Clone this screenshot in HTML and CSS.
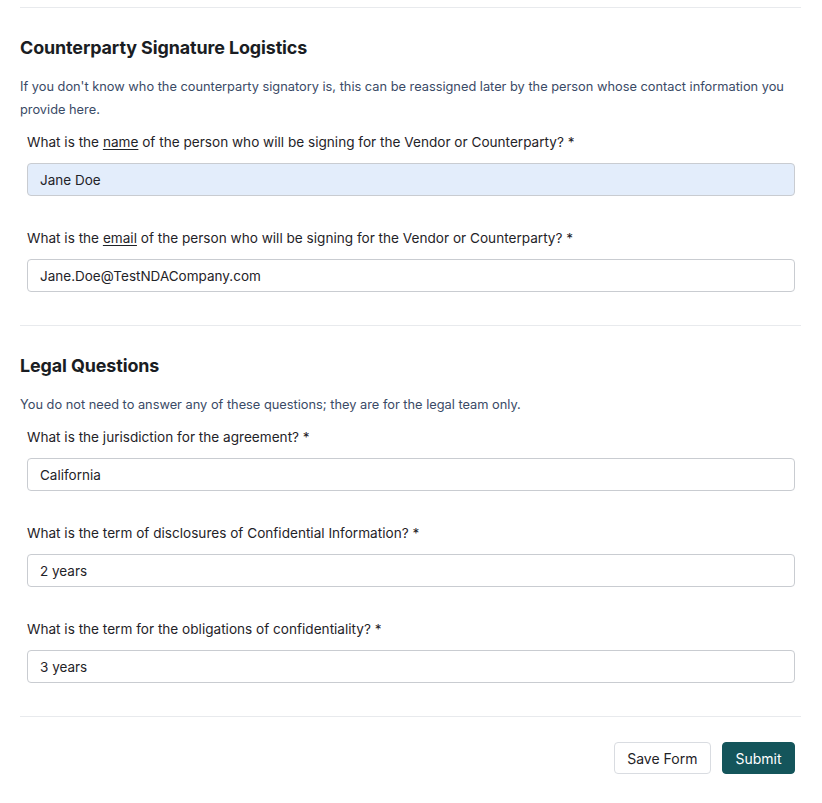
FILE: index.html
```html
<!DOCTYPE html>
<html lang="en">
<head>
<meta charset="utf-8">
<title>Form</title>
<link rel="stylesheet" href="styles.css">
</head>
<body>
<div class="page">
  <hr class="divider first">
  <section class="section">
    <h2 class="section-title">Counterparty Signature Logistics</h2>
    <p class="section-desc">If you don't know who the counterparty signatory is, this can be reassigned later by the person whose contact information you provide here.</p>
    <div class="field">
      <label class="field-label">What is the <u>name</u> of the person who will be signing for the Vendor or Counterparty? *</label>
      <div class="input autofill">Jane Doe</div>
    </div>
    <div class="field">
      <label class="field-label">What is the <u>email</u> of the person who will be signing for the Vendor or Counterparty? *</label>
      <div class="input">Jane.Doe@TestNDACompany.com</div>
    </div>
  </section>
  <hr class="divider">
  <section class="section">
    <h2 class="section-title">Legal Questions</h2>
    <p class="section-desc">You do not need to answer any of these questions; they are for the legal team only.</p>
    <div class="field">
      <label class="field-label">What is the jurisdiction for the agreement? *</label>
      <div class="input">California</div>
    </div>
    <div class="field">
      <label class="field-label">What is the term of disclosures of Confidential Information? *</label>
      <div class="input">2 years</div>
    </div>
    <div class="field">
      <label class="field-label">What is the term for the obligations of confidentiality? *</label>
      <div class="input">3 years</div>
    </div>
  </section>
  <hr class="divider">
  <div class="actions">
    <button class="btn btn-secondary">Save Form</button>
    <button class="btn btn-primary">Submit</button>
  </div>
</div>
</body>
</html>
```
FILE: styles.css
```css
* { box-sizing: border-box; }
html, body { margin: 0; padding: 0; background: #ffffff; }
body {
  font-family: Inter, "Noto Sans", "Liberation Sans", sans-serif;
  color: #1f2328;
}
.page {
  padding: 7px 21px 0 20px;
}
.divider {
  border: 0;
  border-top: 1px solid #e8eaed;
  margin: 0;
}
.section {
  padding: 26px 0 33px;
}
.section-title {
  margin: 0;
  font-size: 17.9px;
  line-height: 28px;
  font-weight: 700;
  color: #1a1d23;
  letter-spacing: -0.1px;
}
.section-desc {
  margin: 13px 0 11px;
  font-size: 12.8px;
  line-height: 23px;
  color: #3a4a66;
}
.field {
  padding: 0 6px 0 7px;
}
.field + .field { margin-top: 32px; }
.field-label {
  display: block;
  font-size: 13.6px;
  line-height: 20px;
  color: #1f2328;
  margin-bottom: 11px;
}
.field-label u { text-underline-offset: 2px; }
.input {
  height: 33px;
  border: 1px solid #c9ccd1;
  border-radius: 4px;
  padding: 0 12px;
  display: flex;
  align-items: center;
  font-size: 13.5px;
  color: #1f2328;
  background: #fff;
}
.input.autofill {
  background: #e3edfb;
}
.actions {
  display: flex;
  justify-content: flex-end;
  gap: 11px;
  padding: 25px 6px 0 0;
}
.btn {
  font-family: inherit;
  font-size: 14px;
  height: 32px;
  border-radius: 4px;
  padding: 0 12.5px;
  cursor: pointer;
}
.btn-secondary {
  background: #fff;
  border: 1px solid #d9dce1;
  color: #1f2328;
}
.btn-primary {
  background: #14555b;
  border: 1px solid #14555b;
  color: #fff;
}
```
